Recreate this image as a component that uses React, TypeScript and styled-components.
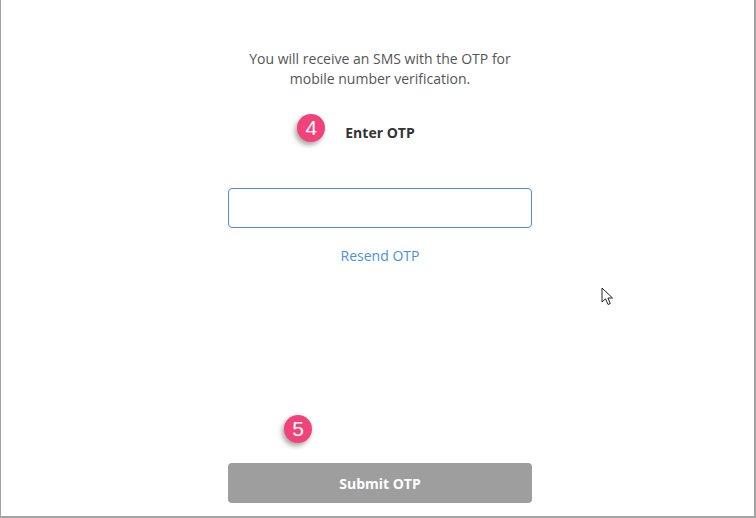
import React from "react";
import styled, { createGlobalStyle } from "styled-components";

const Global = createGlobalStyle`
  html, body { margin: 0; padding: 0; background: #fff; }
  body { font-family: "Open Sans", "Noto Sans", sans-serif; }
`;

const Frame = styled.div`
  position: relative;
  box-sizing: border-box;
  width: 756px;
  height: 518px;
  border-left: 1px solid #a3a3a3;
  border-right: 2px solid #a3a3a3;
  border-bottom: 2px solid #a3a3a3;
  display: flex;
  justify-content: flex-start;
`;

const Column = styled.div`
  margin-left: 227px;
  width: 304px;
  padding-top: 49px;
  display: flex;
  flex-direction: column;
  align-items: center;
`;

const Description = styled.p`
  margin: 0;
  font-size: 14px;
  line-height: 20px;
  color: #555;
  text-align: center;
`;

const LabelRow = styled.div`
  position: relative;
  margin-top: 34px;
  font-size: 14px;
  line-height: 20px;
  font-weight: 700;
  color: #333;
`;

const Badge = styled.span<{ $left: number; $top: number }>`
  position: absolute;
  left: ${(p) => p.$left}px;
  top: ${(p) => p.$top}px;
  width: 28px;
  height: 28px;
  border-radius: 50%;
  background: #f1437a;
  color: #fff;
  font-family: "Liberation Sans", Arial, sans-serif;
  font-size: 21px;
  line-height: 28px;
  text-align: center;
  font-weight: 400;
  box-shadow: -2px 3px 5px rgba(0, 0, 0, 0.35);
`;

const Input = styled.input`
  box-sizing: border-box;
  margin-top: 45px;
  width: 304px;
  height: 40px;
  border: 1px solid #4a90e2;
  border-radius: 4px;
  outline: none;
  font-family: inherit;
  font-size: 14px;
  padding: 0 10px;
`;

const LinkText = styled.a`
  margin-top: 18px;
  font-size: 14px;
  line-height: 20px;
  color: #4a90e2;
  text-decoration: none;
  cursor: pointer;
`;

const ButtonWrap = styled.div`
  position: relative;
  margin-top: 197px;
  width: 304px;
`;

const SubmitButton = styled.button`
  width: 304px;
  height: 40px;
  border: none;
  border-radius: 4px;
  background: #9e9e9e;
  color: #fff;
  font-family: inherit;
  font-size: 14px;
  font-weight: 700;
`;

const Cursor = styled.svg`
  position: absolute;
  left: 600px;
  top: 287px;
`;

export default function App() {
  return (
    <>
      <Global />
      <Frame>
        <Column>
          <Description>
            You will receive an SMS with the OTP for
            <br />
            mobile number verification.
          </Description>
          <LabelRow>
            <Badge $left={-48} $top={-9}>4</Badge>
            Enter OTP
          </LabelRow>
          <Input type="text" />
          <LinkText>Resend OTP</LinkText>
          <ButtonWrap>
            <Badge $left={56} $top={-48}>5</Badge>
            <SubmitButton>Submit OTP</SubmitButton>
          </ButtonWrap>
        </Column>
        <Cursor width="14" height="20" viewBox="0 0 14 20">
          <path
            d="M1 1 L1 15 L4.5 11.8 L7 17.5 L9.3 16.5 L6.9 11 L11.5 11 Z"
            fill="#fff"
            stroke="#222"
            strokeWidth="1"
            strokeLinejoin="round"
          />
        </Cursor>
      </Frame>
    </>
  );
}
